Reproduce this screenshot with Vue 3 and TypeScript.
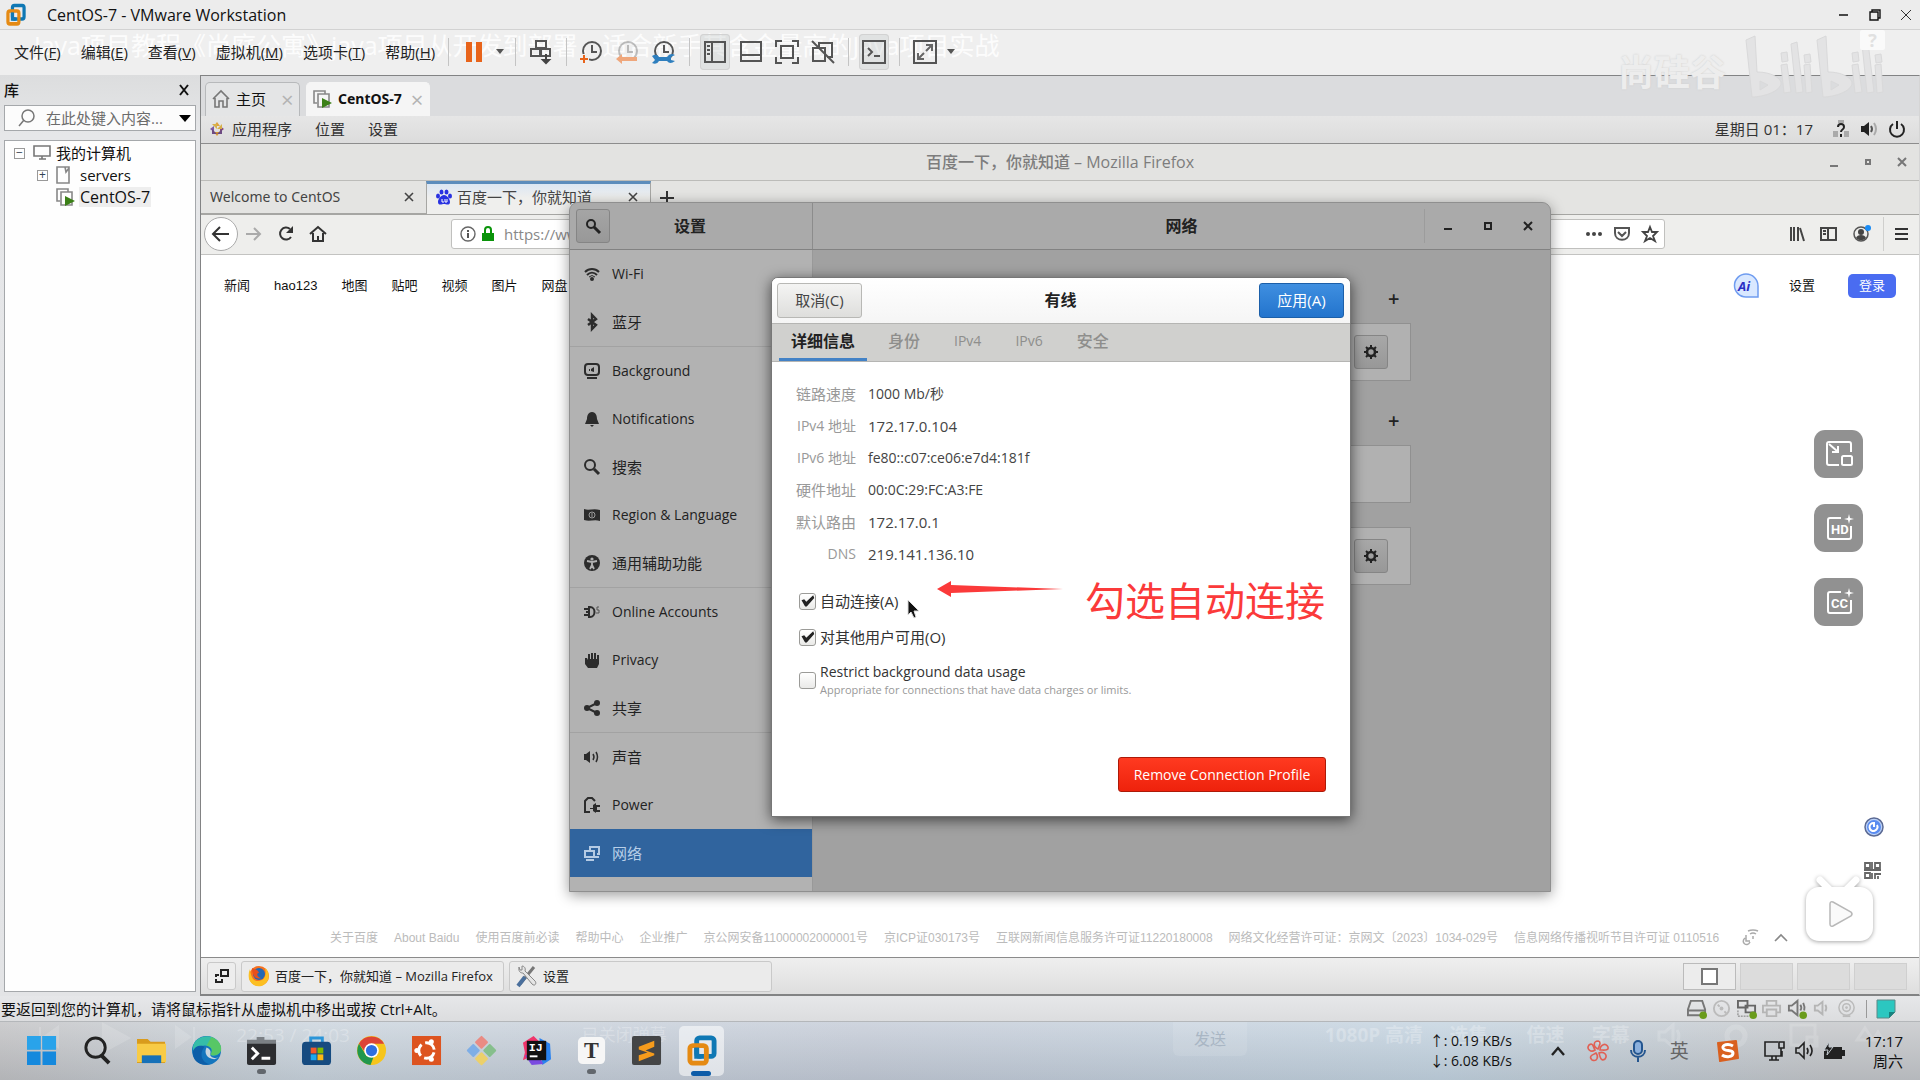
<script setup lang="ts">
import { ref } from 'vue'

interface Glyph { box: string; w: number; h: number; art: string }
interface SideItem { label: string; icon: string; divider?: boolean; active?: boolean }

const menus: [string, string][] = [
  ['文件', 'F'], ['编辑', 'E'], ['查看', 'V'], ['虚拟机', 'M'], ['选项卡', 'T'], ['帮助', 'H'],
]

const g = (w: number, h: number, art: string): Glyph => ({ box: `0 0 ${w} ${h}`, w, h, art })
const isHan = (s: string): boolean => /^[\u4e00-\u9fff]/.test(s)

const clock = '<circle cx="12" cy="11" r="9" fill="none" stroke="#555" stroke-width="2"/><path d="M12 5v7h5" fill="none" stroke="#555" stroke-width="2"/>'
const tools: { name: string; items: (Glyph & { pressed?: boolean; caret?: boolean })[] }[] = [
  { name: 'power', items: [{ ...g(18, 22, '<path d="M1 1h6v20H1zM11 1h6v20h-6z" fill="#e8641b"/>'), caret: true }] },
  { name: 'keys', items: [g(24, 24, '<path d="M7 1h10v7H7zM2 9h9v7H2zM12 9h9v7h-9z" fill="none" stroke="#555" stroke-width="2"/><path d="M17 14v7M14 20l3 3 3-3z" fill="#444" stroke="#444" stroke-width="2"/>')] },
  { name: 'snapshot', items: [
    g(24, 24, clock + '<path d="M-1 19h10M4 14v10" stroke="#f0f0f0" stroke-width="5"/><path d="M0 19h8M4 15v8" stroke="#e8641b" stroke-width="2"/>'),
    g(24, 24, '<g opacity=".35">' + clock + '</g><path d="M0 19l6-5v3h15v4H6v3z" fill="#efa77c"/>'),
    g(24, 24, clock + '<path d="M0 16q5-3 7 1h8q3-5 8-2l-4 2v3l4 1q-5 4-8 0H7q-2 4-7 2l3-3z" fill="#2f7fbe"/>'),
  ] },
  { name: 'view', items: [
    { ...g(24, 24, '<path d="M2 2h20v20H2zM9 2v20M4 6h3M4 10h3M4 14h3" fill="none" stroke="#555" stroke-width="2"/>'), pressed: true },
    g(24, 24, '<path d="M2 2h20v19H2zM2 15h20" fill="none" stroke="#555" stroke-width="2"/>'),
    g(24, 24, '<path d="M1 7V1h6M17 1h6v6M23 17v6h-6M7 23H1v-6M6 6h12v12H6z" fill="none" stroke="#555" stroke-width="2"/>'),
    g(24, 24, '<path d="M8 7V3h13v14h-5M2 8h12v13H2z" fill="none" stroke="#555" stroke-width="2"/><path d="M1 1l22 22" stroke="#555" stroke-width="2"/>'),
  ] },
  { name: 'console', items: [{ ...g(24, 24, '<path d="M1 1h22v22H1z" fill="none" stroke="#555" stroke-width="2"/><path d="M6 8l4 4-4 4M12 16h6" fill="none" stroke="#555" stroke-width="2"/>'), pressed: true }] },
  { name: 'stretch', items: [{ ...g(24, 24, '<path d="M1 1h22v22H1z" fill="none" stroke="#555" stroke-width="2"/><path d="M13 5h6v6M11 19H5v-6M18 6l-5 5M6 18l5-5" fill="none" stroke="#666" stroke-width="2"/>'), caret: true }] },
]

const vmLogo = '<rect x="10" y="2" width="18" height="19" rx="3" fill="none" stroke="#0f78b4" stroke-width="5"/><rect x="3" y="10" width="17" height="18" rx="3" fill="none" stroke="#e58a13" stroke-width="5"/><path d="M10 12v9h5" fill="none" stroke="#0f78b4" stroke-width="5"/>'

const sideItems: SideItem[] = [
  { label: 'Wi-Fi', icon: '<path d="M1 6c4-4 10-4 14 0M3 9c3-3 7-3 10 0" fill="none" stroke="#2c2c2c" stroke-width="2"/><circle cx="8" cy="13" r="2"/><path d="M5 11q3-3 6 0" fill="none" stroke="#2c2c2c" stroke-width="1"/>' },
  { label: '蓝牙', icon: '<path d="M4 5l8 6-4 4V1l4 4-8 6" fill="none" stroke="#2c2c2c" stroke-width="2.4"/>', divider: true },
  { label: 'Background', icon: '<rect x="1" y="1" width="14" height="11" rx="3" fill="none" stroke="#2c2c2c" stroke-width="2"/><path d="M3 14h10v2H3zM5 6h1v2H5zM7 6l3-2v5l-3-1z"/>' },
  { label: 'Notifications', icon: '<path d="M8 1c4 0 5 4 5 7l2 5H1l2-5c0-3 1-7 5-7zM6 14h4l-2 2z"/>' },
  { label: '搜索', icon: '<circle cx="6" cy="6" r="5" fill="none" stroke="#2c2c2c" stroke-width="2"/><path d="M10 10l5 5" stroke="#2c2c2c" stroke-width="3"/>' },
  { label: 'Region & Language', icon: '<path d="M0 2c5 2 9-1 16 1v11c-6-2-10 1-16-1z"/><circle cx="8" cy="8" r="3" fill="none" stroke="#9a9a9a"/><path d="M8 6v4" stroke="#9a9a9a"/>' },
  { label: '通用辅助功能', icon: '<circle cx="8" cy="8" r="8"/><circle cx="8" cy="4" r="1.6" fill="#b2b2b2"/><path d="M3 6l5 1 5-1M8 7v3l-2 4M8 10l2 4" fill="none" stroke="#b2b2b2" stroke-width="1.8"/>', divider: true },
  { label: 'Online Accounts', icon: '<path d="M0 5h5M0 11h5M5 3h1c6 0 6 10 0 10H5zM2 8h3" fill="none" stroke="#2c2c2c" stroke-width="2"/><path d="M15 3h-2v3h2v3h-3" fill="none" stroke="#555" stroke-width="1"/>' },
  { label: 'Privacy', icon: '<path d="M1 6h2l1 2V2h2v5h1V1h2v6h1V1h2v6h1V3h2v9l-2 4H4l-3-4z"/>' },
  { label: '共享', icon: '<circle cx="3" cy="8" r="3"/><circle cx="13" cy="3" r="3"/><circle cx="13" cy="13" r="3"/><path d="M13 3L3 8l10 5" fill="none" stroke="#2c2c2c" stroke-width="2"/>', divider: true },
  { label: '声音', icon: '<path d="M0 5h2l4-3v12l-4-3H0z"/><path d="M9 5q2 3 0 6M12 3q3 5 0 10" fill="none" stroke="#2c2c2c" stroke-width="1.5"/>' },
  { label: 'Power', icon: '<path d="M6 15H1V4l2-2 1-1h4l1 1 2 2" fill="none" stroke="#2c2c2c" stroke-width="2"/><path d="M6 11h3V8l3-2v2h4v2h-3v3h3v2h-4v1l-3-2v-2H6z"/>' },
  { label: '网络', icon: '<path d="M6 5V2h9v7h-2" fill="none" stroke="#b5cbe4" stroke-width="2"/><rect x="1" y="6" width="9" height="6" fill="none" stroke="#b5cbe4" stroke-width="2"/><path d="M2 14h8v2H2zM11 11h4v2h-4z" fill="#b5cbe4"/>', active: true },
]

const details: [string, string, boolean][] = [
  ['链路速度', '1000 Mb/秒', false],
  ['IPv4 地址', '172.17.0.104', true],
  ['IPv6 地址', 'fe80::c07:ce06:e7d4:181f', false],
  ['硬件地址', '00:0C:29:FC:A3:FE', false],
  ['默认路由', '172.17.0.1', true],
  ['DNS', '219.141.136.10', true],
]
const tabs = ['详细信息', '身份', 'IPv4', 'IPv6', '安全']
const autoConnect = ref(true)
const allUsers = ref(true)
const restrict = ref(false)
const keyword = ref('')
const address = ref('https://www.baidu.com')

const links = ['新闻', 'hao123', '地图', '贴吧', '视频', '图片', '网盘']
const footer = ['关于百度', 'About Baidu', '使用百度前必读', '帮助中心', '企业推广', '京公网安备11000002000001号', '京ICP证030173号',
  '互联网新闻信息服务许可证11220180008', '网络文化经营许可证：京网文〔2023〕1034-029号', '信息网络传播视听节目许可证 0110516']

const gear = '<circle cx="8" cy="8" r="4" fill="none" stroke="#222" stroke-width="2.6"/><path d="M8 1v2M8 13v2M1 8h2M13 8h2M3 3l2 2M11 11l2 2M13 3l-2 2M5 11l-2 2" stroke="#222" stroke-width="2"/>'

const dot = '<circle cx="17" cy="17" r="4" fill="#6a9c1c"/>'
const devices: string[] = [
  '<path d="M1 17V11L4 2h12l3 9v6zM1 12h18" fill="none" stroke="#777" stroke-width="2"/>' + dot,
  '<circle cx="10" cy="10" r="8" fill="none" stroke="#bbb" stroke-width="2"/><circle cx="10" cy="10" r="2" fill="#bbb"/><path d="M6 6l2 2M13 13l2 2" stroke="#bbb" stroke-width="2"/>',
  '<path d="M1 2h10v7H1zM9 7h10v7H9z" fill="none" stroke="#666" stroke-width="2"/><path d="M1 12v6h12" fill="none" stroke="#777" stroke-dasharray="2 1"/>' + dot,
  '<path d="M5 7V2h10v5M5 14H1V7h18v7h-4M5 11h10v7H5z" fill="none" stroke="#b5b5b5" stroke-width="2"/>',
  '<path d="M2 7h3l6-5v15l-6-5H2z" fill="none" stroke="#777" stroke-width="2"/><path d="M14 6q2 3 0 6M17 4q2 4 1 8" fill="none" stroke="#777" stroke-width="2"/>' + dot,
  '<path d="M3 7h3l5-4v13l-5-4H3z" fill="none" stroke="#b5b5b5" stroke-width="2"/><path d="M14 6q2 3 0 7" fill="none" stroke="#b5b5b5" stroke-width="2"/>',
  '<circle cx="10" cy="9" r="8" fill="none" stroke="#bbb" stroke-width="1.6"/><circle cx="10" cy="9" r="4" fill="none" stroke="#bbb" stroke-width="1.6"/><circle cx="10" cy="9" r="1.4" fill="#bbb"/><path d="M6 18h8" stroke="#bbb" stroke-width="2"/>',
]

const apps: { name: string; art: string; state?: string }[] = [
  { name: 'start', art: '<path d="M0 0h14v14H0zM16 0h14v14H16zM0 16h14v14H0zM16 16h14v14H16z" fill="#1589dd"/><path d="M0 0h14v14H0zM16 0h14v14H16z" fill="#29a3ea"/>' },
  { name: 'search', art: '<circle cx="14" cy="12" r="10" fill="none" stroke="#222" stroke-width="3"/><path d="M20 20l8 8" stroke="#222" stroke-width="4"/>' },
  { name: 'files', art: '<path d="M0 3h11l3 3h15v22H0z" fill="#d99b1c"/><path d="M0 8h30v19H0z" fill="#f8cb45"/><path d="M5 20h20v8H5z" fill="#1671b8"/>' },
  { name: 'edge', art: '<circle cx="15" cy="15" r="15" fill="#1475bd"/><path d="M1 11C4-3 28-4 30 13c0 7-8 9-11 6 4-5-1-10-7-9C7 10 3 11 1 16z" fill="#35bda8"/><path d="M20 1c8 3 11 9 10 14-2 5-8 6-11 4 4-5 0-9-4-9z" fill="#57c766"/><path d="M1 16c2-6 8-7 12-5-6 7-3 17 6 18C8 32 0 25 1 16z" fill="#0d5ea8"/><path d="M15 12c-3 6 1 12 8 12l5-2c-6 2-10-1-9-4 1-2-1-5-4-6z" fill="#c6d5e0"/>' },
  { name: 'terminal', state: 'run', art: '<path d="M0 4h10V1h8v3h12v25H0z" fill="#7b8085"/><path d="M0 8h30v20q0 2-2 2H2q-2 0-2-2z" fill="#2c2d30"/><path d="M5 12l6 6-6 6M15 23h9" fill="none" stroke="#fff" stroke-width="3"/>' },
  { name: 'store', art: '<path d="M9 7V2h12v5" fill="none" stroke="#2b95d8" stroke-width="3"/><rect y="6" width="30" height="24" rx="4" fill="#164b80"/><path d="M9 12h6v6H9z" fill="#f2592a"/><path d="M16 12h6v6h-6z" fill="#7fba00"/><path d="M9 19h6v6H9z" fill="#1ba8ee"/><path d="M16 19h6v6h-6z" fill="#fdb913"/>' },
  { name: 'chrome', art: '<circle cx="15" cy="15" r="15" fill="#f6c51b"/><path d="M2 8A15 15 0 0128 8H15l-7 8z" fill="#dc4437"/><path d="M2 8l8 13 7 1-3 8A15 15 0 012 8z" fill="#21974d"/><circle cx="15" cy="15" r="7.5" fill="#fff"/><circle cx="15" cy="15" r="5.8" fill="#2f6fe0"/>' },
  { name: 'ubuntu', art: '<path d="M0 0h30v30H0z" fill="#dd5420"/><circle cx="15" cy="15" r="8" fill="none" stroke="#fff" stroke-width="3" stroke-dasharray="13 4" stroke-dashoffset="-2"/><circle cx="5" cy="15" r="2.6" fill="#fff"/><circle cx="20" cy="6" r="2.6" fill="#fff"/><circle cx="20" cy="24" r="2.6" fill="#fff"/>' },
  { name: 'git', art: '<g transform="rotate(45 15 15)"><rect x="4" y="4" width="10" height="10" rx="1" fill="#e98b83"/><rect x="16" y="4" width="10" height="10" rx="1" fill="#86bf8c"/><rect x="4" y="16" width="10" height="10" rx="1" fill="#7eaee6"/><rect x="16" y="16" width="10" height="10" rx="1" fill="#ecd06a"/></g>' },
  { name: 'idea', art: '<path d="M1 7L12 0l7 7-6 12-12 6 2-8z" fill="#f0356b"/><path d="M18 2l11 6 1 16-9 6z" fill="#2b83ef"/><path d="M3 20l7 10 12-1-4-8z" fill="#7a4be0"/><path d="M5 5h20v20H5z" fill="#111"/><text x="7" y="15" font-family="Liberation Mono,monospace" font-weight="700" font-size="12" fill="#fff">IJ</text><path d="M8 20h8v2H8z" fill="#fff"/>' },
  { name: 'typora', state: 'run', art: '<rect x="1" y="1" width="28" height="28" rx="5" fill="#f6f6f6"/><text x="15" y="23" text-anchor="middle" font-family="Liberation Serif,serif" font-weight="700" font-size="23" fill="#333">T</text>' },
  { name: 'sublime', art: '<rect width="30" height="30" rx="2" fill="#444546"/><path d="M7 11l16-6v6l-9 4 9 3v2L7 26v-6l9-3-9-3z" fill="#f59b1c"/>' },
  { name: 'vmware', state: 'active', art: vmLogo },
]

const tray: Glyph[] = [
  g(16, 10, '<path d="M2 9l6-7 6 7" fill="none" stroke="#222" stroke-width="2.4"/>'),
  g(22, 22, '<g fill="none" stroke="#e06155" stroke-width="1.6"><path d="M11 9c-5-2-5-8 0-8 4 1 1 5 0 8zM13 10c0-5 6-8 8-3 1 4-4 3-8 3zM12 13c5-2 9 2 6 6-4 3-5-2-6-6zM9 13c3 4 1 9-4 7-4-4 1-5 4-7zM8 10C4 13-1 9 2 5c4-3 4 2 6 5z"/></g>'),
  g(16, 22, '<rect x="4" y="1" width="8" height="13" rx="4" fill="#8bb0dd" stroke="#23558f" stroke-width="2"/><path d="M1 10c0 9 14 9 14 0M8 17v5" fill="none" stroke="#23558f" stroke-width="2"/>'),
]

const faders: { label: string; left: string }[] = [
  { label: '1080P 高清', left: '69%' }, { label: '选集', left: '75.5%' }, { label: '倍速', left: '79.5%' }, { label: '字幕', left: '82.9%' },
]
</script>

<template>
  <div class="host">
    <header class="titlebar">
      <svg class="logo" viewBox="0 0 31 31" width="20" height="22" preserveAspectRatio="none" v-html="vmLogo"></svg>
      <span class="caption">CentOS-7 - VMware Workstation</span>
      <span class="wctl">
        <button aria-label="minimize"><svg width="12" height="12"><path d="M1 6h9" stroke="#111" stroke-width="1.5" /></svg></button>
        <button aria-label="restore"><svg width="12" height="12"><path d="M1 3h8v8H1zM3 3V1h8v8H9" fill="none" stroke="#111" stroke-width="1.4" /></svg></button>
        <button aria-label="close"><svg width="12" height="12"><path d="M1 1l10 10M11 1L1 11" stroke="#333" /></svg></button>
      </span>
    </header>

    <div class="toolbar">
      <nav class="menus">
        <button v-for="m in menus" :key="m[0]">{{ m[0] }}(<u>{{ m[1] }}</u>)</button>
      </nav>
      <div v-for="grp in tools" :key="grp.name" class="group">
        <template v-for="(t, i) in grp.items" :key="i">
          <button class="tool" :class="{ pressed: t.pressed }" :aria-label="grp.name">
            <svg :viewBox="t.box" :width="t.w" :height="t.h" v-html="t.art"></svg>
          </button>
          <span v-if="t.caret" class="caret"></span>
        </template>
      </div>
    </div>

    <main class="main">
      <aside class="library">
        <div class="lib-head"><b>库</b><button aria-label="close library"><svg width="12" height="12"><path d="M2 1l8 10M10 1L2 11" stroke="#111" stroke-width="2" /></svg></button></div>
        <label class="lib-search">
          <svg width="18" height="18"><circle cx="10" cy="7" r="6" fill="none" stroke="#777" stroke-width="1.5" /><path d="M6 11l-5 6" stroke="#777" stroke-width="1.5" /></svg>
          <input v-model="keyword" aria-label="search" placeholder="在此处键入内容..." />
          <svg width="12" height="8"><path d="M0 1h12L6 8z" /></svg>
        </label>
        <ul class="tree">
          <li><span class="fold">−</span>
            <svg width="18" height="16"><path d="M1 1h16v10H1zM6 14h7M9 11v3" fill="none" stroke="#777" stroke-width="1.6" /></svg><span>我的计算机</span></li>
          <li class="sub"><span class="fold">+</span>
            <svg width="18" height="18"><path d="M2 1h12v16H2zM10 1l1 5 3-4" fill="none" stroke="#888" stroke-width="1.6" /></svg><span>servers</span></li>
          <li class="leaf">
            <svg width="19" height="18"><path d="M4 13H1V1h11v3M5 4h11v13H5z" fill="none" stroke="#888" stroke-width="1.6" /><path d="M9 8l10 5-10 5z" fill="#3b8017" /></svg><span class="picked">CentOS-7</span></li>
        </ul>
      </aside>

      <section class="guest-area">
        <div class="vm-tabs">
          <div class="vm-tab home">
            <svg width="18" height="18"><path d="M1 9l8-8 8 8M3 8v9h4v-6h4v6h4V8" fill="none" stroke="#777" stroke-width="1.6" /></svg>
            <span>主页</span><i class="shut">×</i>
          </div>
          <div class="vm-tab on">
            <svg width="19" height="18"><path d="M4 13H1V1h11v3M5 4h11v13H5z" fill="none" stroke="#888" stroke-width="1.6" /><path d="M9 8l10 5-10 5z" fill="#3b8017" /></svg>
            <b>CentOS-7</b><i class="shut">×</i>
          </div>
        </div>

        <div class="guest">
          <div class="gnome-top">
            <svg width="14" height="14"><path d="M7 0l3 4H4z" fill="#e0a13a" /><path d="M14 7l-4 3V4z" fill="#8a4a7e" /><path d="M7 14l-3-4h6z" fill="#d9982f" /><path d="M0 7l4-3v6z" fill="#7d5aa5" /><path d="M2 2h5v5zM12 2v5H7z" fill="#d7b04a" /><path d="M12 12H7l5-5zM2 12V7l5 5z" fill="#6d4b83" /></svg>
            <span>应用程序</span><span class="place">位置</span><span class="place">设置</span>
            <span class="when">星期日 01：17</span>
            <svg width="18" height="18"><path d="M1 11h5v6H1zM12 11h5v6h-5zM6 0h6v3H6z" fill="#aaa" /><path d="M6 7c0-4 6-4 6 0 0 3-3 2-3 5M9 14v3" fill="none" stroke="#222" stroke-width="2" /></svg>
            <svg width="18" height="16"><path d="M1 5h3l5-4v14l-5-4H1z" fill="#222" /><path d="M11 5q2 3 0 6" fill="none" stroke="#555" stroke-width="2" /><path d="M14 2q4 6 0 12" fill="none" stroke="#aaa" stroke-width="2" /></svg>
            <svg width="18" height="18"><path d="M5 4a7 7 0 108 0M9 1v8" fill="none" stroke="#222" stroke-width="2" /></svg>
          </div>

          <div class="ff-title">
            <span>百度一下，你就知道 – Mozilla Firefox</span>
            <span class="ff-ctl"><svg width="10" height="10"><path d="M1 9h8" stroke="#777" stroke-width="2" /></svg><svg width="10" height="10"><path d="M3 3h4v4H3z" fill="none" stroke="#777" stroke-width="2" /></svg><svg width="10" height="10"><path d="M1 1l8 8M9 1L1 9" stroke="#777" stroke-width="2" /></svg></span>
          </div>

          <div class="ff-tabs">
            <div class="ff-tab"><span>Welcome to CentOS</span><svg width="10" height="10"><path d="M1 1l8 8M9 1L1 9" stroke="#444" stroke-width="1.6" /></svg></div>
            <div class="ff-tab sel">
              <svg width="16" height="16" fill="#2932e1"><ellipse cx="2" cy="7" rx="2" ry="2.6" /><ellipse cx="5.5" cy="3" rx="2" ry="2.6" /><ellipse cx="10.5" cy="3" rx="2" ry="2.6" /><ellipse cx="14" cy="7" rx="2" ry="2.6" /><path d="M8 6c3 0 6 4 6 7 0 4-4 2-6 2s-6 2-6-2c0-3 3-7 6-7z" /><path d="M6 10v3h2M9 10v3h2v-3" fill="none" stroke="#fff" /></svg>
              <span>百度一下，你就知道</span><svg width="10" height="10"><path d="M1 1l8 8M9 1L1 9" stroke="#444" stroke-width="1.6" /></svg></div>
            <svg class="add" width="14" height="14"><path d="M7 0v14M0 7h14" stroke="#333" stroke-width="2" /></svg>
          </div>

          <div class="ff-nav">
            <button class="back" aria-label="back"><svg width="18" height="16"><path d="M17 8H2M8 1L1 8l7 7" fill="none" stroke="#333" stroke-width="2" /></svg></button>
            <button aria-label="forward"><svg width="16" height="16"><path d="M0 8h14M8 2l6 6-6 6" fill="none" stroke="#aaa" stroke-width="2" /></svg></button>
            <button aria-label="reload"><svg width="16" height="16"><path d="M13 11a6 6 0 11-1-8" fill="none" stroke="#333" stroke-width="2" /><path d="M15 0v7H8z" fill="#333" /></svg></button>
            <button aria-label="home"><svg width="18" height="16"><path d="M1 8l8-7 8 7M4 7v8h10V7M9 15v-5" fill="none" stroke="#333" stroke-width="2" /></svg></button>
            <div class="url">
              <svg width="16" height="16"><circle cx="8" cy="8" r="7" fill="none" stroke="#666" stroke-width="1.4" /><path d="M8 7v5M8 4v2" stroke="#555" stroke-width="2" /></svg>
              <svg width="12" height="16"><path d="M0 7h12v8H0z" fill="#0a940a" /><path d="M3 8V4c0-4 6-4 6 0v4" fill="none" stroke="#0a940a" stroke-width="2" /></svg>
              <input v-model="address" aria-label="address" />
              <svg width="16" height="16" fill="#444"><circle cx="2" cy="8" r="2" /><circle cx="8" cy="8" r="2" /><circle cx="14" cy="8" r="2" /></svg>
              <svg width="16" height="16"><path d="M1 2h14v5c0 9-14 9-14 0zM4 6l4 4 4-4" fill="none" stroke="#555" stroke-width="2" /></svg>
              <svg width="16" height="16"><path d="M8 1l2 5h5l-4 4 2 5-5-3-5 3 2-5-4-4h5z" fill="none" stroke="#444" stroke-width="1.8" /></svg>
            </div>
            <span class="ff-tools">
              <svg width="16" height="16"><path d="M2 1v14M5 1v14M9 1v14M11 2l4 13" stroke="#444" stroke-width="2" /></svg>
              <svg width="18" height="16"><path d="M1 2h15v12H1zM8 2v12M3 5h3M3 8h3" fill="none" stroke="#444" stroke-width="2" /></svg>
              <svg width="18" height="18"><circle cx="8" cy="9" r="7" fill="none" stroke="#555" stroke-width="1.5" /><circle cx="8" cy="7" r="3" fill="#444" /><path d="M3 13c1-4 9-4 10 0-3 3-7 3-10 0z" fill="#444" /><circle cx="15" cy="3" r="3" fill="#1a8cf5" /></svg>
              <span class="burger"><svg width="14" height="14"><path d="M0 2h13M0 7h13M0 12h13" stroke="#333" stroke-width="2" /></svg></span>
            </span>
          </div>

          <div class="page">
            <div class="bd-top">
              <a v-for="l in links" :key="l" href="#">{{ l }}</a>
              <svg class="ai" width="26" height="26"><path d="M13 1a12 12 0 0112 12v11H13a11 11 0 010-23z" fill="#d9e8ff" stroke="#6f9cf0" stroke-width="1.5" /><text x="5" y="18" font-family="Open Sans, sans-serif" font-size="13" font-weight="700" font-style="italic" fill="#2a2fc4">Ai</text></svg>
              <a href="#" class="conf">设置</a>
              <button class="login">登录</button>
            </div>
            <div class="bd-side">
              <svg width="20" height="20"><circle cx="10" cy="10" r="9" fill="#bcd2f8" stroke="#5b6a94" stroke-width="1.5" /><circle cx="10" cy="10" r="7" fill="#5a8cf0" /><path d="M13 8a4 4 0 11-3-2v4" fill="none" stroke="#fff" stroke-width="2" /></svg>
              <svg width="18" height="18"><path d="M1 1h5v5H1zM11 1h5v5h-5zM1 11h5v5H1zM8 0v7M8 11v6M0 8h17M11 11v6M11 12h6M14 14v3" fill="none" stroke="#666" stroke-width="1.8" /></svg>
            </div>
            <footer class="bd-foot">
              <a v-for="f in footer" :key="f" href="#">{{ f }}</a>
              <svg class="care" width="16" height="16"><path d="M4 5v6h4M3 8c-5 4 2 10 5 4" fill="none" stroke="#aaa" stroke-width="1.5" /><path d="M6 1q5-2 10 0M8 4q3-2 6 0M11 6v3" fill="none" stroke="#aaa" stroke-width="1.5" /></svg>
              <svg class="fold-up" width="14" height="10"><path d="M1 8l6-6 6 6" fill="none" stroke="#888" stroke-width="1.6" /></svg>
            </footer>
          </div>

          <div class="dock">
            <button class="show" aria-label="show desktop"><svg width="16" height="16"><path d="M7 2h7v6H7z" fill="none" stroke="#222" stroke-width="2" /><path d="M5 7H2v2M2 11v3h6v-3" fill="none" stroke="#222" stroke-width="2" /></svg></button>
            <button class="task"><svg width="22" height="22"><circle cx="11" cy="11" r="10" fill="#f6701e" /><path d="M2 4q-2 4-1 10c3 9 15 10 19 1 2-5 0-10-3-12 2 8-1 13-7 13-5 0-7-4-8-12z" fill="#fcbf22" /><circle cx="11" cy="9" r="6" fill="#2368b5" /><path d="M4 3c3 2 6 1 7 5-3 0-2 4 2 5-5 2-9-2-9-10z" fill="#e8501c" /></svg>
              <span>百度一下，你就知道 – Mozilla Firefox</span></button>
            <button class="task"><svg width="22" height="22"><path d="M4 19L18 2" stroke="#777" stroke-width="3" /><path d="M2 21l7-9" stroke="#4a6f9c" stroke-width="4" /><path d="M3 2c-1 6 3 6 4 6l9 11c3 3 5-1 3-3L9 6c1-3-1-5-3-5v4L4 5z" fill="#e5e5e5" stroke="#888" /></svg><span>设置</span></button>
            <span class="spaces"><i class="cur"><em></em></i><i></i><i></i><i></i></span>
          </div>

          <div class="window-layer">
            <section class="settings">
              <header class="s-head">
                <div class="s-left"><button class="s-find" aria-label="find"><svg width="16" height="16"><circle cx="6" cy="6" r="4" fill="none" stroke="#222" stroke-width="2" /><path d="M9 9l6 6" stroke="#222" stroke-width="3" /></svg></button><b>设置</b></div>
                <b class="s-title">网络</b>
                <div class="s-ctl"><svg width="10" height="10"><path d="M1 8h8" stroke="#222" stroke-width="2" /></svg><svg width="10" height="10"><path d="M2 2h6v6H2z" fill="none" stroke="#222" stroke-width="2" /></svg><svg width="10" height="10"><path d="M1 1l8 8M9 1L1 9" stroke="#222" stroke-width="2" /></svg></div>
              </header>
              <div class="s-body">
                <ul class="s-list">
                  <li v-for="s in sideItems" :key="s.label" :class="{ divider: s.divider, active: s.active, han: isHan(s.label) }">
                    <svg width="16" height="16" fill="#2c2c2c" v-html="s.icon"></svg><span>{{ s.label }}</span>
                  </li>
                </ul>
                <div class="s-main">
                  <div class="s-col">
                    <div class="plus">+</div>
                    <div class="card"><button aria-label="options"><svg width="16" height="16" v-html="gear"></svg></button></div>
                    <div class="plus second">+</div>
                    <div class="card"></div>
                    <div class="card third"><button aria-label="options"><svg width="16" height="16" v-html="gear"></svg></button></div>
                  </div>
                </div>
              </div>

              <section class="dialog">
                <header class="d-head"><button>取消(C)</button><b>有线</b><button class="apply">应用(A)</button></header>
                <nav class="d-tabs"><button v-for="(t, i) in tabs" :key="t" :class="{ on: i === 0, han: isHan(t) }">{{ t }}</button></nav>
                <dl class="d-info">
                  <template v-for="d in details" :key="d[0]"><dt :class="{ han: isHan(d[0]) }">{{ d[0] }}</dt><dd :class="{ wide: d[2] }">{{ d[1] }}</dd></template>
                </dl>
                <div class="d-checks">
                  <label><input v-model="autoConnect" type="checkbox" /><span>自动连接(A)</span></label>
                  <label><input v-model="allUsers" type="checkbox" /><span>对其他用户可用(O)</span></label>
                  <label class="two"><input v-model="restrict" type="checkbox" /><span>Restrict background data usage<small>Appropriate for connections that have data charges or limits.</small></span></label>
                </div>
                <div class="d-foot"><button>Remove Connection Profile</button></div>
                <svg class="pointer" width="14" height="20"><path d="M1 1v15l3-3 3 6 2-1-2-6h5z" fill="#111" stroke="#ddd" /></svg>
                <svg class="arrow" width="128" height="16"><path d="M0 8L14 0v4l112 4-112 4v4z" fill="#fb3a3a" /></svg>
                <span class="note">勾选自动连接</span>
              </section>
            </section>
          </div>
        </div>
      </section>
    </main>

    <div class="status">
      <span>要返回到您的计算机，请将鼠标指针从虚拟机中移出或按 Ctrl+Alt。</span>
      <span class="devices">
        <svg v-for="(d, i) in devices" :key="i" viewBox="0 0 21 21" width="20" height="20" v-html="d"></svg>
        <span class="memo"><svg width="18" height="18"><path d="M0 0h18v12l-6 6H0z" fill="#2cc7c0" stroke="#5c8987" /><path d="M12 18v-6h6z" fill="#17827f" /></svg></span>
      </span>
    </div>

    <footer class="taskbar">
      <button v-for="a in apps" :key="a.name" class="app" :class="a.state" :aria-label="a.name"><svg viewBox="0 0 31 31" width="30" height="30" v-html="a.art"></svg></button>
      <div class="tray">
        <div class="net"><span>↑: 0.19 KB/s</span><span>↓: 6.08 KB/s</span></div>
        <svg v-for="(t, i) in tray" :key="i" class="cell" :viewBox="t.box" :width="t.w" :height="t.h" v-html="t.art"></svg>
        <span class="ime">英</span>
        <svg class="sogou" width="22" height="22"><path d="M1 3L19 1l2 17-18 3z" fill="#d9601f" stroke="#d9601f" stroke-width="2" stroke-linejoin="round" /><path d="M16 6c-5-3-11-1-10 2 1 4 10 1 10 5 0 4-7 5-11 2" fill="none" stroke="#fff" stroke-width="3" /></svg>
        <div class="sys">
          <svg width="21" height="22"><path d="M14 2H1v14h17v-5M5 20h10M8 16v4M12 16v4M15 2h5v6h-5zM17 8v8" fill="none" stroke="#222" stroke-width="1.6" /></svg>
          <svg width="19" height="18"><path d="M1 6h3l5-5v15l-5-5H1z" fill="none" stroke="#222" stroke-width="1.6" /><path d="M12 6q2 3 0 6M15 3q4 6 0 11" fill="none" stroke="#222" stroke-width="1.6" /></svg>
          <svg width="21" height="18"><path d="M3 6h14v10H1V9M18 9h2v4h-2" fill="#222" stroke="#222" stroke-width="2" /><path d="M5 0L0 8h4L3 13l6-8H5z" fill="#222" stroke="#c4cbd1" /></svg>
        </div>
        <div class="clock"><span>17:17</span><span>周六</span></div>
      </div>
    </footer>

    <div class="ghost-title">Java项目教程《尚庭公寓》java项目从开发到部署，适合新手其含金量高的Java项目实战</div>
    <div class="mark">
      <span>尚硅谷</span>
      <svg width="144" height="62" viewBox="0 0 144 62">
        <g v-for="n in 2" :key="n" :transform="`translate(${(n - 1) * 71} 0)`"><path d="M2 4l9-4 2 36c14 0 24 6 24 11C37 55 20 61 8 61zM16 45v9l8-5z" /><path d="M37 29l6-1 4 28-7 1zM47 8l6-2 6 50-7 1zM60 29l6-1 2 28-6 1zM37 17l6-1 1 9-6 1zM60 19l6-1 1 8-6 1z" /></g>
      </svg>
    </div>
    <span class="help">?</span>

    <div class="player-side">
      <button aria-label="picture in picture"><svg width="28" height="28"><path d="M14 25H4q-2 0-2-2V4q0-2 2-2h20q2 0 2 2v8M4 4l8 7M13 6v6H7" fill="none" stroke="#fff" stroke-width="2" /><rect x="17" y="16" width="10" height="9" rx="1.5" fill="none" stroke="#fff" stroke-width="2" /></svg></button>
      <button aria-label="HD"><svg width="28" height="28"><path d="M16 4H5Q3 4 3 6v17q0 2 2 2h19q2 0 2-2V12" fill="none" stroke="#fff" stroke-width="2" /><path d="M24 0l1 4 4 1-4 1-1 4-1-4-4-1 4-1z" fill="#fff" /><text x="6" y="20" font-family="Roboto, sans-serif" font-weight="700" font-size="13" fill="#fff">HD</text></svg></button>
      <button aria-label="CC"><svg width="28" height="28"><path d="M16 4H5Q3 4 3 6v17q0 2 2 2h19q2 0 2-2V12" fill="none" stroke="#fff" stroke-width="2" /><path d="M24 0l1 4 4 1-4 1-1 4-1-4-4-1 4-1z" fill="#fff" /><text x="6" y="20" font-family="Roboto, sans-serif" font-weight="700" font-size="13" fill="#fff">CC</text></svg></button>
    </div>
    <svg class="tv" width="76" height="74"><g fill="#fff"><path d="M18 5l9 9M54 5l-9 9" stroke="#fff" stroke-width="7" stroke-linecap="round" /><rect x="4" y="12" width="67" height="54" rx="13" /></g><path d="M28 29q0-3 3-2l18 10q2 2 0 4L31 51q-3 1-3-2z" fill="#fafafa" stroke="#b8b8b8" stroke-width="1.5" /></svg>

    <div class="ghost-bar">
      <svg class="keys" width="170" height="34"><path d="M8 5v20M26 5v20L12 15zM71 2v28l26-14zM144 5v20l14-10zM162 5v20" fill="#fff" stroke="#fff" stroke-width="2" /></svg>
      <span style="left: 12.3%">22:53 / 24:03</span>
      <span style="left: 30.3%" class="dim">已关闭弹幕</span>
      <span class="send">发送</span>
      <span v-for="f in faders" :key="f.label" class="strong" :style="{ left: f.left }">{{ f.label }}</span>
      <svg class="opts" width="230" height="30" fill="none" stroke="#fff" stroke-width="3"><path d="M2 10h6l8-7v22l-8-7H2zM20 8q4 6 0 12" /><circle cx="79" cy="14" r="9" stroke-width="5" /><path d="M134 3h24v20h-24zM150 15h10v9h-10zM200 18l8-12 8 12zM216 18l5-8 5 8z" /></svg>
    </div>
  </div>
</template>

<style>
body { margin: 0; }
</style>

<style scoped>
* { box-sizing: border-box; }
.host { position: relative; display: flex; flex-direction: column; min-height: 100vh; overflow: hidden; background: #dfe0e2; color: #111; font: 15px/20px "Open Sans", "Noto Sans CJK SC", sans-serif; white-space: nowrap; }
button { margin: 0; padding: 0; border: 0; background: none; font: inherit; color: inherit; }
ul, dl, dd { margin: 0; padding: 0; list-style: none; }
a { color: inherit; text-decoration: none; }
svg { display: block; flex: none; overflow: visible; }
i, em { font-style: normal; }

.titlebar { display: flex; align-items: center; height: 30px; padding: 0 8px 0 6px; background: #ececec; border-bottom: 1px solid #d2d2d2; font-size: 16px; }
.caption { margin-left: 21px; }
.wctl { display: flex; gap: 19px; margin-left: auto; }
.toolbar { display: flex; align-items: center; height: 45px; padding-bottom: 2px; background: #efefef; }
.menus { position: relative; z-index: 1; display: flex; flex: 0 0 448px; gap: 20px; padding-left: 14px; color: #222; }
.group { position: relative; z-index: 1; display: flex; align-items: center; height: 28px; padding: 0 7px; border-left: 1px solid #c4c4c4; }
.tool { display: grid; place-items: center; width: 36px; height: 36px; }
.pressed { background: rgba(190, 194, 194, .3); box-shadow: inset 0 0 0 1px #d2d2d2; border-radius: 4px; width: 30px; margin: 0 3px; }
.caret { width: 8px; margin: 0 4px; border: 4px solid transparent; border-top: 5px solid #555; border-bottom: 0; }

.main { display: flex; flex: 1; }
.library { display: flex; flex-direction: column; flex: 0 0 200px; padding: 0 4px 4px; background: linear-gradient(#dcddde, #e6e7e9 60px, #e3e4e6); }
.lib-head { display: flex; align-items: center; justify-content: space-between; height: 30px; padding-right: 6px; }
.lib-head b { font-weight: 500; }
.lib-search { display: flex; align-items: center; height: 26px; padding: 0 4px 0 13px; border: 1px solid #a5a8ab; background: #fcfcfc; }
.lib-search input { flex: 1; width: 0; margin: 0 10px; padding: 0; border: 0; background: none; font: inherit; }
.lib-search input::placeholder { color: #6c6c6c; }
.tree { flex: 1; margin-top: 9px; padding-top: 1px; border: 1px solid #a5a8ab; background: #fefefe; }
.tree li { display: flex; align-items: center; gap: 5px; height: 22px; padding-left: 9px; }
.tree .sub { padding-left: 32px; gap: 7px; }
.tree .leaf { padding-left: 51px; gap: 4px; }
.fold { width: 11px; height: 11px; border: 1px solid #999; color: #345; font-size: 12px; line-height: 8px; text-align: center; margin-right: 3px; }
.sub .fold { margin-right: 0; }
.picked { padding: 0 1px; background: #eee; font-size: 16px; }

.guest-area { display: flex; flex: 1; flex-direction: column; min-width: 0; border: 1px solid #828384; border-right-color: #d5d5d5; border-bottom-width: 2px; }
.vm-tabs { display: flex; align-items: flex-end; gap: 6px; height: 40px; padding-left: 4px; background: #dbdcde; }
.vm-tab { display: flex; align-items: center; gap: 6px; height: 34px; padding: 0 6px 2px; border: 1px solid #b7b9bb; border-bottom: 0; border-radius: 5px 5px 0 0; background: #e4e5e6; }
.vm-tab.on { background: #f5f5f5; border-color: #f5f5f5; }
.vm-tab b { margin-right: 3px; font: 700 14px/20px "Noto Sans", sans-serif; }
.vm-tab span { margin-right: 9px; }
.shut { width: 12px; color: #b3b3b3; font-size: 22px; line-height: 20px; }

.guest { position: relative; display: flex; flex: 1; flex-direction: column; }
.gnome-top { display: flex; align-items: center; height: 28px; padding: 0 13px 2px 9px; border-bottom: 1px solid #8d8d8d; background: linear-gradient(#e6e6e6, #dcdcdc); color: #333; }
.gnome-top > span:first-of-type { margin-left: 8px; }
.place { margin-left: 23px; }
.when { margin: 0 19px 0 auto; }
.gnome-top svg + svg { margin-left: 10px; }
.ff-title { position: relative; display: flex; align-items: center; justify-content: center; height: 37px; border-bottom: 1px solid #bcbcb9; background: #e3e3e1; color: #7d7d7d; font-size: 16px; font-weight: 500; }
.ff-ctl { position: absolute; right: 12px; display: flex; gap: 24px; }
.ff-tabs { display: flex; align-items: center; height: 33px; background: #e4e4e2; }
.ff-tab { display: flex; align-items: center; justify-content: space-between; width: 225px; height: 33px; padding: 0 12px 0 9px; border-bottom: 1px solid #a6a6a3; color: #444; font: 14px/20px "Noto Sans", "Noto Sans CJK SC", sans-serif; }
.ff-tab.sel { padding-bottom: 4px; border: 1px solid #a6a6a3; border-width: 3px 1px 0; border-top-color: #5b8cbc; background: linear-gradient(#dbe6f3, #efefed 14px); font-size: 15px; }
.sel span { flex: 1; margin-left: 5px; }
.add { margin-left: 9px; }
.ff-nav { display: flex; align-items: center; height: 41px; padding: 0 10px 2px 3px; border-top: 1px solid #a6a6a3; border-bottom: 1px solid #c3c3c1; background: #eeeeec; }
.ff-nav button { display: grid; place-items: center; width: 32px; height: 34px; }
.ff-nav .back { width: 34px; border: 1px solid #aaa; border-radius: 50%; background: #fff; }
.url { display: flex; flex: 1; align-items: center; gap: 12px; height: 30px; margin: 0 124px 0 117px; padding: 0 6px 0 8px; border: 1px solid #c0c0be; border-radius: 3px; background: #fff; }
.url svg:nth-of-type(2) { margin-left: -6px; }
.url input { flex: 1; min-width: 0; margin-left: -2px; border: 0; padding: 0; color: #888; font: 15px "Open Sans", sans-serif; background: none; }
.ff-tools { display: flex; align-items: center; gap: 15px; }
.burger { margin-left: -3px; padding: 10px 0 10px 11px; border-left: 1px solid #cfcfcd; }
.page { position: relative; display: flex; flex: 1; flex-direction: column; background: #fff; font: 13px/20px "Liberation Sans", "Noto Sans CJK SC", sans-serif; }
.bd-top { display: flex; align-items: center; gap: 24px; height: 62px; padding: 0 23px; }
.ai { margin-left: auto; }
.conf { margin-left: 6px; }
.login { width: 48px; height: 24px; margin-left: 9px; border-radius: 5px; background: #4a6cf1; color: #fff; }
.bd-side { position: absolute; right: 35px; bottom: 77px; display: flex; flex-direction: column; gap: 25px; }
.bd-foot { display: flex; align-items: center; gap: 16px; margin-top: auto; height: 38px; padding-left: 129px; color: #bbb; font-size: 12px; }
.care { margin-left: 7px; }
.dock { display: flex; align-items: center; gap: 5px; height: 37px; padding: 0 12px 0 6px; border-top: 1px solid #8b8b8b; background: linear-gradient(#efefef, #dedede); color: #222; font-size: 13px; }
.dock button { border: 1px solid #c9c9c9; border-radius: 3px; background: #ededed; }
.dock .show { display: grid; place-items: center; width: 29px; height: 28px; }
.dock .task { display: flex; align-items: center; gap: 5px; width: 263px; height: 31px; padding-left: 6px; background: #ebebeb; }
.spaces { display: flex; gap: 4px; margin-left: auto; }
.spaces i { display: grid; place-items: center; width: 53px; height: 27px; border: 1px solid #cfcfcf; background: #dcdcdc; }
.spaces .cur { border-color: #bbb; background: #ececec; }
.spaces em { width: 17px; height: 17px; border: 2px solid #777; background: #fff; }

.window-layer { position: absolute; inset: 86px 0 0; display: flex; align-items: flex-start; justify-content: center; }
.settings { position: relative; width: 982px; height: 690px; display: flex; flex-direction: column; border: 1px solid #8f8f8f; border-radius: 9px 9px 0 0; background: #a1a1a1; box-shadow: 0 3px 14px rgba(0, 0, 0, .4); font-size: 14px; color: #222; }
.s-head { display: flex; align-items: center; height: 47px; padding-bottom: 1px; border-bottom: 1px solid #828282; background: #aaa; border-radius: 8px 8px 0 0; font-size: 16px; }
.s-left { display: flex; align-items: center; width: 243px; height: 46px; padding-left: 6px; border-right: 1px solid #8c8c8c; }
.s-left b { margin-left: 64px; }
.s-find { display: grid; place-items: center; width: 34px; height: 34px; border: 1px solid #858585; border-radius: 3px; background: linear-gradient(#a5a5a5, #989898); }
.s-title { flex: 1; text-align: center; padding-left: 126px; }
.s-ctl { display: flex; align-items: center; gap: 30px; height: 34px; width: 126px; padding-left: 18px; border-left: 1px solid #9c9c9c; }
.s-body { display: flex; flex: 1; }
.s-list { width: 243px; border-right: 1px solid #999; background: #b2b2b2; }
.s-list li { display: flex; align-items: center; gap: 12px; height: 48px; padding-left: 14px; box-sizing: content-box; }
.s-list .divider { border-bottom: 1px solid #a2a2a2; }
.s-list .active { background: #30649e; color: #b8cfe8; }
.s-list .han { font-size: 15px; }
.s-main { flex: 1; display: flex; justify-content: center; }
.s-col { width: 458px; padding-top: 37px; }
.plus { height: 24px; margin-bottom: 12px; padding-right: 11px; text-align: right; font-size: 20px; line-height: 24px; font-weight: 600; }
.second { margin-top: 28px; }
.card { display: flex; align-items: center; justify-content: flex-end; height: 58px; padding-right: 22px; border: 1px solid #909090; background: #b1b1b1; }
.third { margin-top: 24px; }
.card button { display: grid; place-items: center; width: 34px; height: 34px; border: 1px solid #858585; border-radius: 3px; background: linear-gradient(#a8a8a8, #989898); }

.dialog { position: absolute; left: 201px; top: 74px; width: 580px; height: 540px; display: flex; flex-direction: column; border: 1px solid #777; border-radius: 7px 7px 0 0; background: #fff; box-shadow: 0 3px 14px rgba(0, 0, 0, .6); }
.d-head { display: flex; align-items: center; justify-content: space-between; height: 46px; padding: 0 6px 1px 5px; border-bottom: 1px solid #b5b5b3; border-radius: 6px 6px 0 0; background: linear-gradient(#fff, #f5f5f5); font-size: 16px; }
.d-head button { width: 85px; height: 35px; border: 1px solid #b8b8b5; border-radius: 3px; background: linear-gradient(#f4f4f3, #dededc); color: #444; font-size: 15px; }
.d-head .apply { border-color: #1b5fa9; background: linear-gradient(#3f8fe0, #2374cd); color: #fff; }
.d-tabs { display: flex; gap: 8px; height: 38px; padding-left: 7px; border-bottom: 1px solid #b5b5b3; background: #d0d0ce; color: #8e8e8c; }
.d-tabs button { padding: 0 13px; border-bottom: 3px solid transparent; font-weight: 500; font-size: 14px; }
.d-tabs .han { font-size: 16px; }
.d-tabs .on { padding: 0 12px; border-color: #4382c6; color: #222; font-weight: 700; }
.d-info { display: grid; grid-template-columns: 84px 1fr; column-gap: 12px; padding-top: 16px; line-height: 32px; color: #444; }
.d-info dt { text-align: right; color: #999; font-size: 14px; }
.d-info .han, .d-info .wide { font-size: 15px; }
.d-checks { display: flex; flex-direction: column; padding: 13px 0 0 27px; font-size: 15px; color: #333; }
.d-checks label { display: flex; align-items: center; gap: 4px; height: 36px; }
.d-checks .two { height: 50px; font-size: 14px; }
.d-checks small { display: block; font-size: 11px; line-height: 16px; color: #999; }
.d-checks input { appearance: none; width: 17px; height: 17px; margin: 0; border: 1px solid #9b9b98; border-radius: 3px; background: linear-gradient(#fff, #eaeae8); }
.d-checks input:checked::before { content: ""; display: block; width: 15px; height: 15px; background: #222; clip-path: polygon(10% 45%, 28% 38%, 42% 55%, 88% 12%, 95% 30%, 45% 86%, 34% 86%); }
.d-foot { margin-top: auto; padding: 0 24px 24px; text-align: right; }
.d-foot button { width: 208px; height: 35px; border: 1px solid #ad1a08; border-radius: 3px; background: linear-gradient(#ff3a20, #ee220c); color: #fff; }
.pointer { position: absolute; left: 135px; top: 321px; }
.arrow { position: absolute; left: 165px; top: 303px; }
.note { position: absolute; left: 313px; top: 294px; color: #fb3a3a; font-size: 40px; line-height: 58px; }

.status { display: flex; align-items: center; justify-content: space-between; height: 26px; padding: 0 25px 0 1px; border-bottom: 1px solid #b4b7ba; background: linear-gradient(#e6e7e9, #dcdddf); }
.devices { display: flex; align-items: center; gap: 5px; }
.memo { margin-left: 4px; padding-left: 10px; border-left: 1px solid #999; }
.taskbar { display: flex; align-items: center; height: 58px; padding: 0 17px 0 14px; background: linear-gradient(rgba(255, 255, 255, .2), rgba(80, 90, 100, .12)), linear-gradient(90deg, #c0c0c2, #c9d3dc 16%, #c3cad6 45%, #c2d2df 75%, #c3c5c8 95%); }
.app { position: relative; z-index: 1; display: grid; place-items: center; width: 55px; height: 50px; flex: none; }
.app::after { position: absolute; bottom: 2px; left: 23px; width: 9px; height: 5px; border-radius: 3px; }
.run::after { content: ""; background: #62676d; }
.active.app { width: 45px; margin-left: 5px; border-radius: 5px; background: rgba(255, 255, 255, .55); }
.active.app::after { content: ""; left: 12px; bottom: 0; width: 20px; background: #0e5ca8; }
.tray { position: relative; z-index: 1; display: flex; align-items: center; margin-left: auto; }
.net, .clock { display: flex; flex-direction: column; }
.net { width: 82px; margin-right: 38px; font-size: 14px; }
.cell + .cell { margin-left: 21px; }
.ime { margin: 0 28px 0 24px; font-size: 19px; color: #666; }
.sys { display: flex; align-items: center; gap: 10px; margin: 0 20px 0 25px; }
.clock { align-items: flex-end; }

.ghost-title { position: absolute; left: 34px; top: 27px; color: rgba(255, 255, 255, .85); font-size: 25px; line-height: 36px; pointer-events: none; }
.mark { position: absolute; right: 32px; top: 36px; display: flex; gap: 18px; pointer-events: none; }
.mark span { color: #ededed; font-size: 36px; line-height: 40px; font-weight: 700; margin-top: 17px; text-shadow: 0 0 2px #ccc; }
.mark svg { fill: #e3e3e4; stroke: #d9d9da; fill-rule: evenodd; }
.help { position: absolute; right: 35px; top: 30px; width: 25px; height: 20px; border-radius: 2px; background: #fafafa; color: #e1e1e1; font-weight: 700; font-size: 18px; text-align: center; }
.player-side { position: absolute; right: 57px; top: 430px; display: flex; flex-direction: column; gap: 26px; }
.player-side button { display: grid; place-items: center; width: 49px; height: 48px; border-radius: 11px; background: #919191; }
.tv { position: absolute; right: 42px; top: 875px; filter: drop-shadow(0 1px 2px rgba(0, 0, 0, .35)); }
.ghost-bar { position: absolute; left: 0; right: 0; bottom: 24px; height: 34px; color: rgba(255, 255, 255, .25); font-size: 19px; line-height: 26px; pointer-events: none; }
.ghost-bar svg { position: absolute; opacity: .15; }
.keys { left: 32px; }
.opts { left: 86.3%; }
.ghost-bar span { position: absolute; }
.strong { font-weight: 700; }
.ghost-bar .dim { font-size: 17px; }
.ghost-bar .send { right: 673px; padding: 0 21px; line-height: 34px; border-radius: 0 0 6px 6px; background: rgba(255, 255, 255, .1); color: #a9b6c4; font-size: 16px; }
</style>
